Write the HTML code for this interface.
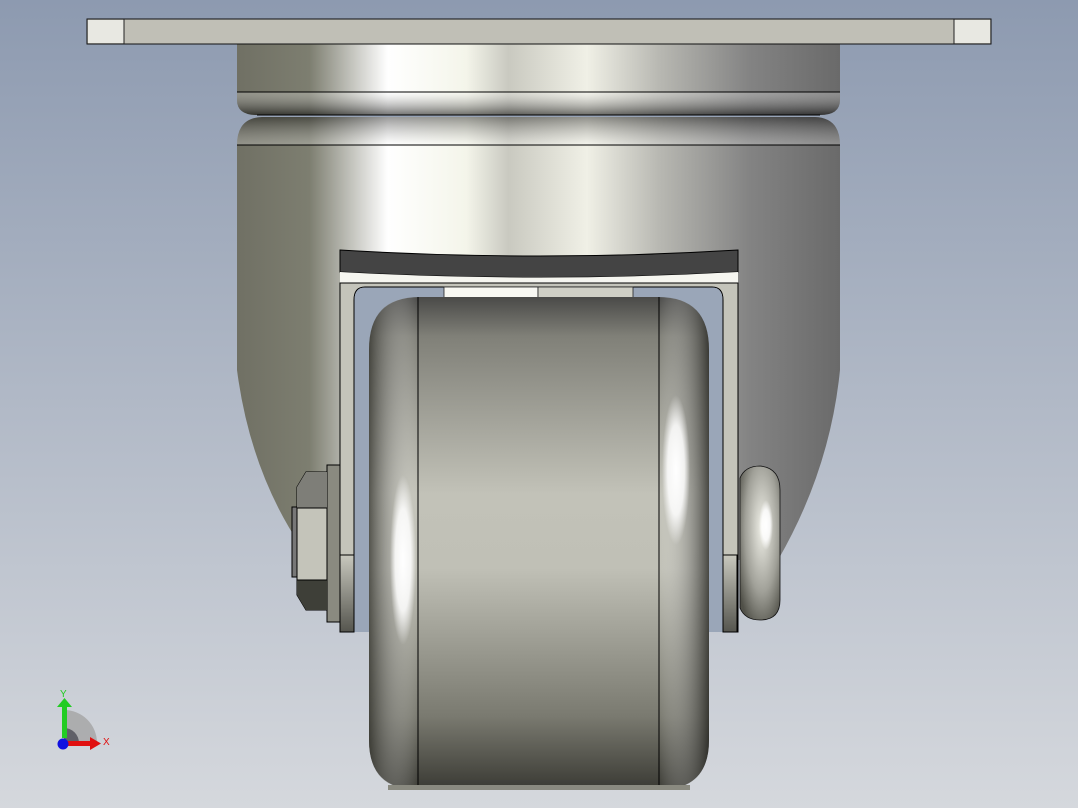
<!DOCTYPE html>
<html><head><meta charset="utf-8"><style>
html,body{margin:0;padding:0;width:1078px;height:808px;overflow:hidden}
body{background:linear-gradient(#8d9ab0,#d5d8dd)}
svg{position:absolute;left:0;top:0}
</style></head><body>
<svg width="1078" height="808" viewBox="0 0 1078 808" xmlns="http://www.w3.org/2000/svg">
<defs>
<linearGradient id="cyl" x1="237" x2="840" gradientUnits="userSpaceOnUse" y1="0" y2="0">
<stop offset="0" stop-color="#707064"/><stop offset="0.12" stop-color="#7d7e70"/>
<stop offset="0.25" stop-color="#ffffff"/><stop offset="0.38" stop-color="#f4f5ea"/>
<stop offset="0.45" stop-color="#c9c9c0"/><stop offset="0.58" stop-color="#f0f0e6"/>
<stop offset="0.7" stop-color="#b8b8b2"/><stop offset="0.85" stop-color="#838383"/>
<stop offset="1" stop-color="#6a6a6a"/></linearGradient>
<linearGradient id="band" x1="0" x2="0" y1="0" y2="1">
<stop offset="0" stop-color="#fff" stop-opacity="0.25"/><stop offset="1" stop-color="#000" stop-opacity="0.55"/></linearGradient>
<linearGradient id="band2" x1="0" x2="0" y1="0" y2="1">
<stop offset="0" stop-color="#000" stop-opacity="0.4"/><stop offset="1" stop-color="#fff" stop-opacity="0.25"/></linearGradient>
<linearGradient id="wheel" x1="0" x2="0" y1="297" y2="790" gradientUnits="userSpaceOnUse">
<stop offset="0" stop-color="#4a4a48"/><stop offset="0.08" stop-color="#808078"/>
<stop offset="0.4" stop-color="#c2c2b8"/><stop offset="0.55" stop-color="#c0c0b6"/>
<stop offset="0.85" stop-color="#7a7a70"/><stop offset="1" stop-color="#3a3a34"/></linearGradient>
<linearGradient id="wl" x1="369" x2="418" gradientUnits="userSpaceOnUse" y1="0" y2="0">
<stop offset="0" stop-color="#30302a" stop-opacity="0.75"/><stop offset="1" stop-color="#fff" stop-opacity="0"/></linearGradient>
<linearGradient id="wr" x1="659" x2="709" gradientUnits="userSpaceOnUse" y1="0" y2="0">
<stop offset="0" stop-color="#fff" stop-opacity="0"/><stop offset="1" stop-color="#20201c" stop-opacity="0.75"/></linearGradient>
<radialGradient id="hl"><stop offset="0" stop-color="#fff"/><stop offset="0.6" stop-color="#fff" stop-opacity="0.85"/><stop offset="1" stop-color="#fff" stop-opacity="0"/></radialGradient>
<linearGradient id="leg" x1="0" x2="0" y1="555" y2="632" gradientUnits="userSpaceOnUse">
<stop offset="0" stop-color="#c8c8be"/><stop offset="1" stop-color="#55554e"/></linearGradient>
<radialGradient id="bulb" cx="0.55" cy="0.4" r="0.7">
<stop offset="0" stop-color="#f0f0e8"/><stop offset="0.6" stop-color="#a0a098"/><stop offset="1" stop-color="#505048"/></radialGradient>
</defs>
<path d="M237 145 Q237 118 262 117 L815 117 Q840 118 840 145 L840 370 Q830 470 778 560 L738 560 L738 283 L340 283 L340 545 L300 545 Q250 470 237 370 Z" fill="url(#cyl)"/>
<path d="M237 145 Q237 118 262 117 L815 117 Q840 118 840 145 Z" fill="url(#band2)"/>
<line x1="237" y1="145" x2="840" y2="145" stroke="#000"/>
<path d="M237 44 L840 44 L840 100 Q840 115 820 115 L257 115 Q237 115 237 100 Z" fill="url(#cyl)"/>
<path d="M237 92 L840 92 L840 100 Q840 115 820 115 L257 115 Q237 115 237 100 Z" fill="url(#band)"/>
<line x1="237" y1="92" x2="840" y2="92" stroke="#000"/>
<line x1="257" y1="115" x2="820" y2="115" stroke="#000"/>
<rect x="87" y="19" width="904" height="25" fill="#c0bfb6" stroke="#111"/>
<rect x="88" y="20" width="36" height="23" fill="#e8e8e2"/>
<rect x="954" y="20" width="36" height="23" fill="#e8e8e2"/>
<line x1="124" y1="19" x2="124" y2="44" stroke="#222"/>
<line x1="954" y1="19" x2="954" y2="44" stroke="#222"/>
<path d="M340 250 Q540 262 738 250 L738 272 Q540 283 340 272 Z" fill="#444" stroke="#000"/>
<path d="M340 272 Q540 283 738 272 L738 283 L340 283 Z" fill="#f6f6f0"/>
<path d="M340 283 L738 283 L738 632 L723 632 L723 300 Q723 287 712 287 L365 287 Q354 287 354 300 L354 632 L340 632 Z" fill="#c4c4ba" stroke="#000"/>
<path d="M354.5 300 Q354.5 287.5 365 287.5 L712 287.5 Q722.5 287.5 722.5 300 L722.5 632 L354.5 632 Z" fill="#9aa6b8"/>
<rect x="444" y="287" width="94" height="12" fill="#f8f8f2" stroke="#222" stroke-width="0.8"/>
<rect x="538" y="287" width="95" height="12" fill="#d0d0c6" stroke="#222" stroke-width="0.8"/>
<rect x="340" y="555" width="14" height="77" fill="url(#leg)" stroke="#000"/>
<rect x="723" y="555" width="14" height="77" fill="url(#leg)" stroke="#000"/>
<rect x="327" y="465" width="13" height="157" fill="#8a8a80" stroke="#000"/>
<rect x="292" y="507" width="6" height="70" fill="#777" stroke="#000"/>
<path d="M306 472 L327 472 L327 610 L306 610 L297 595 L297 487 Z" fill="#c4c4ba" stroke="#000"/>
<path d="M306 472 L327 472 L327 508 L297 508 L297 487 Z" fill="#7e7e78"/>
<path d="M297 580 L327 580 L327 610 L306 610 L297 595 Z" fill="#3e3f38"/>
<line x1="297" y1="508" x2="327" y2="508" stroke="#000"/>
<line x1="297" y1="580" x2="327" y2="580" stroke="#000"/>
<path d="M740 478 Q745 466 760 466 Q780 468 780 490 L780 600 Q780 620 760 620 Q745 620 740 608 Z" fill="url(#bulb)" stroke="#111" stroke-width="0.8"/>
<ellipse cx="766" cy="525" rx="7" ry="25" fill="url(#hl)"/>
<path d="M369 350 Q369 297 420 297 L658 297 Q709 297 709 350 L709 740 Q709 790 658 790 L420 790 Q369 790 369 740 Z" fill="url(#wheel)"/>
<path d="M369 350 Q369 297 418 297 L418 790 Q369 790 369 740 Z" fill="url(#wl)"/>
<path d="M659 297 Q709 297 709 350 L709 740 Q709 790 659 790 Z" fill="url(#wr)"/>
<ellipse cx="403" cy="560" rx="13" ry="85" fill="url(#hl)"/>
<ellipse cx="676" cy="470" rx="14" ry="75" fill="url(#hl)"/>
<line x1="418" y1="297" x2="418" y2="790" stroke="#000"/>
<line x1="659" y1="297" x2="659" y2="790" stroke="#000"/>
<rect x="388" y="785" width="302" height="5" fill="#8a8a80"/>
<path d="M64 743 L64 710 A33 33 0 0 1 97 743 Z" fill="#a8a8aa" opacity="0.9"/>
<path d="M64 743 L64 728 A15 15 0 0 1 79 743 Z" fill="#606068"/>
<rect x="62" y="705" width="5" height="33" fill="#22cc22"/>
<path d="M57 707 L64.5 698 L72 707 Z" fill="#22cc22"/>
<rect x="64" y="741" width="27" height="5" fill="#e01010"/>
<path d="M90 737 L101 743.5 L90 750 Z" fill="#e01010"/>
<circle cx="63" cy="744" r="5.5" fill="#1010e0"/>
<text x="60" y="697" font-family="Liberation Sans, sans-serif" font-size="10" fill="#22cc22">Y</text>
<text x="103" y="745" font-family="Liberation Sans, sans-serif" font-size="10" fill="#e01010">X</text>
</svg>
</body></html>
